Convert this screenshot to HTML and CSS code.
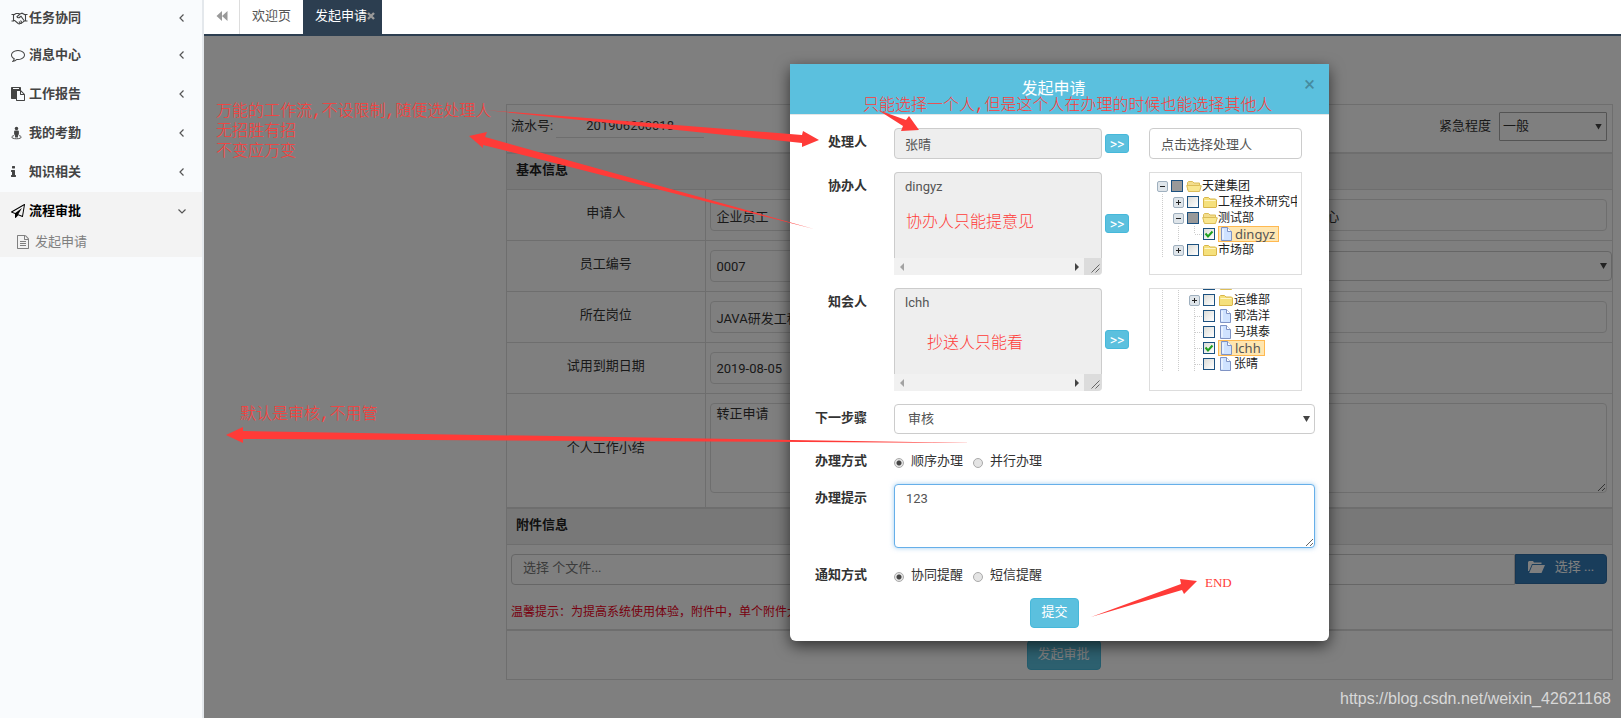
FILE: index.html
```html
<!DOCTYPE html>
<html lang="zh-CN">
<head>
<meta charset="utf-8">
<title>发起申请</title>
<link rel="stylesheet" href="styles.css">
</head>
<body>
<svg class="sprite" aria-hidden="true">
  <symbol id="folder" viewBox="0 0 16 16"><path d="M1.500 13.500V4.500l1-1h4l1.500 1.500h5.500l1 1v7l-.5.5h-12z" fill="#f5e07c" stroke="#d9b64a"/><path d="M2.500 6.500h11" stroke="#fff6c8"/></symbol>
  <symbol id="folder-open" viewBox="0 0 16 16"><path d="M1.500 12V4.500l1-1h4L8 5h5.500v3" fill="#f3dd8c" stroke="#dcbd58"/><path d="M.7 7.500h12.800l1.800.3-1.800 5.700H2.400z" fill="#f9e68f" stroke="#dcbd58"/></symbol>
  <symbol id="doc" viewBox="0 0 16 16"><path d="M2.500 1.500h6l4 4v9h-10z" fill="#cfe2ff" stroke="#7f93c4"/><path d="M8.500 1.500v4h4" fill="#fff" stroke="#7f93c4"/><path d="M4 3v10" stroke="#fff"/></symbol>
  <symbol id="angle" viewBox="0 0 10 10"><path d="M6.500 1.500 3 5l3.500 3.500" fill="none" stroke="currentColor" stroke-width="1.200"/></symbol>
  <symbol id="check" viewBox="0 0 10 10"><path d="M1.500 4.500 4 7.500 8.500 2.500" fill="none" stroke="#1fa01f" stroke-width="2"/></symbol>
</svg>

<nav class="sidebar">
  <a class="nav-item" href="#"><svg class="ico wide" viewBox="0 0 17 14" fill="none" stroke="currentColor" stroke-width="1.100"><path d="M.5 3.500h2v6.500h-2M16.500 3.500h-2v6.500h2M2.500 4l2.500-1.500h2.500L9 3l2-.8 3.500 1.800M2.500 9.500h1.200l3.500 3c.8.5 1.600.3 2-.3.8.3 1.500 0 1.800-.7.7.1 1.300-.4 1.400-1l2.100-1M9 3 6 5.700c.5 1.300 2 1.300 3 .3l1-.7 3 4.200M8 10.500l1.200 1.600M9.500 9.500l1.500 2"/></svg><span>任务协同</span><svg class="angle"><use href="#angle"/></svg></a>
  <a class="nav-item" href="#"><svg class="ico" viewBox="0 0 1792 1792" fill="currentColor"><path d="M896 384q-204 0-381.500 69.500t-282 187.500-104.500 255q0 112 71.500 213.500t201.500 175.500l87 50-27 96q-24 91-70 172 152-63 275-171l43-38 57 6q69 8 130 8 204 0 381.500-69.500t282-187.500 104.500-255-104.500-255-282-187.500-381.500-69.500zm896 512q0 174-120 321.500t-326 233-450 85.500q-70 0-145-8-198 175-460 242-49 14-114 22h-5q-15 0-27-10.500t-16-27.500v-1q-3-4-.5-12t2-10 4.500-9.500l6-9 7-8.500 8-9q7-8 31-34.500t34.500-38 31-39.500 32.500-51 27-59 26-76q-157-89-247.500-220t-90.500-281q0-174 120-321.500t326-233 450-85.500 450 85.500 326 233 120 321.500z"/></svg><span>消息中心</span><svg class="angle"><use href="#angle"/></svg></a>
  <a class="nav-item" href="#"><svg class="ico" viewBox="0 0 1792 1792" fill="currentColor"><path d="M768 1664h896v-640h-416q-40 0-68-28t-28-68v-416h-384v1152zm256-1440v-64q0-13-9.500-22.500t-22.500-9.500h-704q-13 0-22.500 9.500t-9.500 22.500v64q0 13 9.500 22.500t22.500 9.500h704q13 0 22.500-9.500t9.500-22.500zm256 672h299l-299-299v299zm512 128v672q0 40-28 68t-68 28h-960q-40 0-68-28t-28-68v-160h-544q-40 0-68-28t-28-68v-1344q0-40 28-68t68-28h1088q40 0 68 28t28 68v328q21 13 36 28l408 408q28 28 48 76t20 88z"/></svg><span>工作报告</span><svg class="angle"><use href="#angle"/></svg></a>
  <a class="nav-item" href="#"><svg class="ico street" viewBox="0 0 12 14" fill="currentColor"><circle cx="6" cy="2" r="1.900"/><path d="M4 4.300h4l.6.7v3.500l-1 .6V12H4.400V9.100l-1-.6V5z"/><path d="M3.500 9.800C-.8 10.600.2 13.300 6 13.300s6.800-2.700 2.500-3.500" fill="none" stroke="currentColor"/></svg><span>我的考勤</span><svg class="angle"><use href="#angle"/></svg></a>
  <a class="nav-item" href="#"><svg class="ico info" viewBox="576 0 640 1792" fill="currentColor"><path d="M1216 1344v128q0 26-19 45t-45 19h-512q-26 0-45-19t-19-45v-128q0-26 19-45t45-19h64v-384h-64q-26 0-45-19t-19-45v-128q0-26 19-45t45-19h384q26 0 45 19t19 45v576h64q26 0 45 19t19 45zm-128-1152v192q0 26-19 45t-45 19h-256q-26 0-45-19t-19-45v-192q0-26 19-45t45-19h256q26 0 45 19t19 45z"/></svg><span>知识相关</span><svg class="angle"><use href="#angle"/></svg></a>
  <div class="nav-open">
    <a class="nav-item current" href="#"><svg class="ico" viewBox="0 0 1792 1792" fill="currentColor"><path d="M1764 11q33 24 27 64l-256 1536q-5 29-32 45-14 8-31 8-11 0-24-5l-527-215-298 327q-18 21-47 21-14 0-23-4-19-7-30-23.500t-11-36.500v-452l-472-193q-37-14-40-55-3-39 32-59l1664-960q35-21 68 2zm-342 1499l221-1323-1434 827 336 137 863-639-478 797z"/></svg><span>流程审批</span><svg class="angle down"><use href="#angle"/></svg></a>
    <a class="nav-sub" href="#"><svg class="ico" viewBox="0 0 1792 1792" fill="currentColor"><path d="M1596 380q28 28 48 76t20 88v1152q0 40-28 68t-68 28h-1344q-40 0-68-28t-28-68v-1600q0-40 28-68t68-28h896q40 0 88 20t76 48zm-444-244v376h376q-10-29-22-41l-313-313q-12-12-41-22zm384 1528v-1024h-416q-40 0-68-28t-28-68v-416h-768v1536h1280zm-1024-864q0-14 9-23t23-9h704q14 0 23 9t9 23v64q0 14-9 23t-23 9h-704q-14 0-23-9t-9-23v-64zm736 224q14 0 23 9t9 23v64q0 14-9 23t-23 9h-704q-14 0-23-9t-9-23v-64q0-14 9-23t23-9h704zm0 256q14 0 23 9t9 23v64q0 14-9 23t-23 9h-704q-14 0-23-9t-9-23v-64q0-14 9-23t23-9h704z"/></svg><span>发起申请</span></a>
  </div>
</nav>

<main class="main">
  <header class="tabs">
    <button class="tab-back" type="button" aria-label="向左"><svg viewBox="0 0 12 10" fill="currentColor"><path d="M6 0v10L.5 5zM11.500 0v10L6 5z"/></svg></button>
    <a class="tab" href="#">欢迎页</a>
    <a class="tab active" href="#">发起申请<svg viewBox="0 0 8 8"><path d="M1 1l6 6M7 1 1 7" stroke="currentColor" stroke-width="2.400"/></svg></a>
  </header>

  <div class="content">
    <form class="sheet">
      <section class="block top-row">
        <label class="serial">流水号: <input type="text" value="201906260018"></label>
        <label class="urgency">紧急程度 <span class="select"><select><option>一般</option></select></span></label>
      </section>
      <section class="block">
        <h2>基本信息</h2>
        <table>
          <colgroup><col class="c-label"><col class="c-mid"><col class="c-label"><col></colgroup>
          <tr><th><label for="f1">申请人</label></th><td><input id="f1" type="text" value="企业员工"></td><th><label for="f2">所在部门</label></th><td><input id="f2" type="text" value="工程技术研究中心"></td></tr>
          <tr><th><label for="f3">员工编号</label></th><td><input id="f3" type="text" value="0007"></td><th><label for="f4">类型</label></th><td class="flush"><span class="select"><select id="f4"><option></option></select></span></td></tr>
          <tr><th><label for="f5">所在岗位</label></th><td><input id="f5" type="text" value="JAVA研发工程师"></td><th></th><td><input type="text" aria-label="岗位"></td></tr>
          <tr><th><label for="f6">试用到期日期</label></th><td><input id="f6" type="text" value="2019-08-05"></td><td class="blank" colspan="2"></td></tr>
          <tr><th><label for="f7">个人工作小结</label></th><td colspan="3" class="memo"><textarea id="f7">转正申请</textarea></td></tr>
        </table>
      </section>
      <section class="block">
        <h2>附件信息</h2>
        <div class="files">
          <div class="file-group"><input type="text" placeholder="选择 个文件..." aria-label="文件"><button type="button"><svg viewBox="0 0 17 12" fill="currentColor"><path d="M0 10V1l1-1h4l1 1.500h7.500V3H4L1 10zM4.500 4H17l-3.500 8H1.200z"/></svg>选择 ...</button></div>
          <p class="hint">温馨提示：为提高系统使用体验，附件中，单个附件大小</p>
        </div>
      </section>
      <section class="block foot"><button type="button">发起审批</button></section>
    </form>
    <div class="backdrop"></div>
    <div class="modal-layer">
      <form class="modal" role="dialog" aria-label="发起申请">
        <header><h1>发起申请</h1><button type="button" aria-label="关闭">×</button></header>
        <div class="modal-body">
          <label for="m1">处理人</label>
          <div class="field"><input id="m1" class="who" type="text" value="张晴" readonly><button class="pick" type="button">&gt;&gt;</button><input class="side" type="text" value="点击选择处理人" aria-label="选择处理人"></div>

          <label for="m2">协办人</label>
          <div class="field">
            <div class="list"><textarea id="m2" readonly>dingyz</textarea><div class="scroll"><svg class="dim" viewBox="0 0 4 8"><path d="M4 0v8L0 4z"/></svg><svg viewBox="0 0 4 8"><path d="M0 0v8l4-4z"/></svg><i><svg viewBox="0 0 9 9"><path d="M.5 8.500l8-8M4.500 8.500l4-4" fill="none" stroke="#666"/></svg></i></div></div>
            <button class="pick" type="button">&gt;&gt;</button>
            <ul class="side tree">
              <li><b class="sw minus"></b><span class="box half"></span><svg><use href="#folder-open"/></svg>天建集团</li>
              <li><b class="ln"></b><b class="sw"></b><span class="box"></span><svg><use href="#folder"/></svg>工程技术研究中心</li>
              <li><b class="ln"></b><b class="sw minus"></b><span class="box half"></span><svg><use href="#folder-open"/></svg>测试部</li>
              <li><b class="ln"></b><b class="ln"></b><b class="elbow"></b><span class="box"><svg><use href="#check"/></svg></span><em><svg><use href="#doc"/></svg>dingyz</em></li>
              <li><b class="ln"></b><b class="sw"></b><span class="box"></span><svg><use href="#folder"/></svg>市场部</li>
            </ul>
          </div>

          <label for="m3">知会人</label>
          <div class="field">
            <div class="list"><textarea id="m3" readonly>lchh</textarea><div class="scroll"><svg class="dim" viewBox="0 0 4 8"><path d="M4 0v8L0 4z"/></svg><svg viewBox="0 0 4 8"><path d="M0 0v8l4-4z"/></svg><i><svg viewBox="0 0 9 9"><path d="M.5 8.500l8-8M4.500 8.500l4-4" fill="none" stroke="#666"/></svg></i></div></div>
            <button class="pick" type="button">&gt;&gt;</button>
            <ul class="side tree scrolled">
              <li><b class="ln"></b><b class="ln"></b><b class="ln"></b><span class="box"></span><svg><use href="#folder-open"/></svg></li>
              <li><b class="ln"></b><b class="ln"></b><b class="sw"></b><span class="box"></span><svg><use href="#folder"/></svg>运维部</li>
              <li><b class="ln"></b><b class="ln"></b><b class="ln tee"></b><span class="box"></span><svg><use href="#doc"/></svg>郭浩洋</li>
              <li><b class="ln"></b><b class="ln"></b><b class="ln tee"></b><span class="box"></span><svg><use href="#doc"/></svg>马琪泰</li>
              <li><b class="ln"></b><b class="ln"></b><b class="ln tee"></b><span class="box"><svg><use href="#check"/></svg></span><em><svg><use href="#doc"/></svg>lchh</em></li>
              <li><b class="ln"></b><b class="ln"></b><b class="ln tee"></b><span class="box"></span><svg><use href="#doc"/></svg>张晴</li>
            </ul>
          </div>

          <label for="m4">下一步骤</label>
          <div class="field"><span class="select step"><select id="m4"><option>审核</option></select></span></div>

          <span class="lbl">办理方式</span>
          <div class="field radios"><label><input type="radio" name="mode" checked>顺序办理</label><label><input type="radio" name="mode">并行办理</label></div>

          <label for="m5">办理提示</label>
          <div class="field"><textarea id="m5" class="tip">123</textarea></div>

          <span class="lbl">通知方式</span>
          <div class="field radios"><label><input type="radio" name="notice" checked>协同提醒</label><label><input type="radio" name="notice">短信提醒</label></div>

          <button class="submit" type="button">提交</button>
        </div>
      </form>
    </div>
  </div>
</main>

<div class="notes">
  <svg width="1621" height="718" fill="#ff3b38"><path d="M485 110 802 135 803 131 819 140 802 147 802 143zM469 136 487 132 485 137 814 229 483 145 483 148zM226 435 243 427 243 431 975 443 243 439 243 443zM878 110 906 120 909 116 919 130 901 131 903 126zM1091 617 1181 584 1180 579 1197 581 1184 594 1182 590z"/></svg>
  <p class="n1">万能的工作流,不设限制,随便选处理人<br>无招胜有招<br>不变应万变</p>
  <p class="n2">只能选择一个人,但是这个人在办理的时候也能选择其他人</p>
  <p class="n3">协办人只能提意见</p>
  <p class="n4">抄送人只能看</p>
  <p class="n5">默认是审核,不用管</p>
  <p class="n6">END</p>
</div>
<div class="watermark">https://blog.csdn.net/weixin_42621168</div>
</body>
</html>
```
FILE: styles.css
```css
* { box-sizing: border-box; }
body {
  margin: 0;
  min-height: 100vh;
  display: grid;
  grid-template-columns: 204px minmax(0, 1fr);
  font: 13px/18px Roboto, "Noto Sans CJK SC", sans-serif;
  color: #333;
  position: relative;
}
input, select, textarea, button { font: inherit; color: inherit; margin: 0; }
h1, h2, p, ul { margin: 0; padding: 0; }
a { color: inherit; text-decoration: none; }
.sprite { position: absolute; width: 0; height: 0; }

/* sidebar */
.sidebar { background: #f9fbfd; border-right: 2px solid #e4e8ec; }
.nav-item { display: flex; align-items: center; height: 39px; padding: 0 15px 1px 11px; font-weight: bold; color: #444; }
.nav-item:first-child { height: 36px; }
.nav-open .nav-item { height: 39px; padding-bottom: 2px; }
.nav-item span { flex: 1; }
.ico { width: 14px; height: 14px; margin-right: 4px; flex: none; }
.ico.wide { width: 17px; margin-right: 1px; }
.ico.street { width: 11px; margin-right: 7px; }
.ico.info { width: 5px; margin-right: 13px; }
.angle { width: 10px; height: 10px; color: #555; }
.angle.down { transform: rotate(-90deg); }
.nav-open { background: #f3f3f3; }
.nav-item.current { color: #000; }
.nav-sub { display: flex; align-items: center; height: 26px; padding: 0 0 4px 16px; color: #808080; }
.nav-sub .ico { width: 14px; margin-right: 5px; }

/* tab bar */
.main { display: flex; flex-direction: column; }
.tabs { display: flex; height: 36px; border-bottom: 2px solid #2c3e50; background: #fff; }
.tab-back { width: 36px; border: 0; border-right: 1px solid #ddd; background: none; color: #999; padding: 0; }
.tab-back svg { width: 12px; height: 10px; }
.tab { display: flex; align-items: center; padding: 0 12px 2px; color: #555; }
.tab.active { background: #2c3e50; color: #fff; padding-right: 7px; }
.tab svg { width: 8px; height: 8px; color: #999; }

/* form sheet */
.content { position: relative; flex: 1; padding: 68px 8px 38px 302px; background: #fff; }
.backdrop { position: absolute; inset: 0; background: rgba(0, 0, 0, .5); }
.block { border: 1px solid #ddd; }
.block h2 { height: 35px; padding: 7px 9px; background: #f0f0f0; font-size: 13px; line-height: 18px; color: #222; }
.top-row { display: flex; justify-content: space-between; align-items: center; height: 49px; padding: 0 5px 5px 4px; }
.serial, .urgency { display: flex; align-items: center; }
.serial { gap: 3px; }
.serial input { width: 148px; height: 24px; border: 0; border-bottom: 1px solid #ddd; background: none; text-align: center; }
.urgency { gap: 8px; }
.select { position: relative; display: block; flex: 1; }
.select select { appearance: none; width: 100%; height: 30px; border: 1px solid #ccc; border-radius: 4px; background: #fff; padding: 0 12px; }
.select::after { content: ""; position: absolute; right: 5px; top: 12px; width: 7px; height: 6px; background: #444; clip-path: polygon(0 0, 100% 0, 50% 100%); }
.urgency .select { width: 108px; flex: none; }
.urgency select { height: 29px; padding: 0 3px; border-color: #a9a9a9; border-radius: 1px; }
table { width: 100%; table-layout: fixed; border-collapse: collapse; }
.c-label { width: 18%; }
.c-mid { width: 29%; }
th, td { height: 51px; padding: 0 5px 0 4px; border-top: 1px solid #ddd; font-weight: normal; }
th { padding-bottom: 4px; }
th:first-child { border-right: 1px solid #ddd; }
td input, td textarea { display: block; width: 100%; height: 32px; padding: 0 5px; border: 1px solid #ddd; border-radius: 4px; background: #fff; }
td textarea { height: 90px; padding-top: 1px; }
td.memo { height: 113px; padding-bottom: 4px; }
td.flush { padding-right: 0; }
.files { padding: 9px 5px 0 4px; height: 85px; border-top: 1px solid #ddd; }
.file-group { display: flex; }
.file-group input { flex: 1; height: 31px; padding: 0 11px 4px; border: 1px solid #ccc; border-radius: 4px 0 0 4px; background: #fff; }
.file-group input::placeholder { color: #777; }
.file-group button { width: 92px; height: 30px; padding: 0 0 3px; border: 1px solid #2e6da4; border-radius: 0 4px 4px 0; background: #337ab7; color: #fff; display: flex; align-items: center; justify-content: center; gap: 10px; }
.file-group svg { width: 17px; height: 12px; }
.hint { margin-top: 17px; font-size: 12px; font-family: "Noto Sans CJK TC", sans-serif; color: #f00020; white-space: nowrap; }
.foot { display: flex; justify-content: center; align-items: center; height: 50px; padding-left: 8px; }
.foot button { width: 74px; height: 30px; border: 1px solid #46b8da; border-radius: 4px; background: #5bc0de; color: #fff; padding: 0 0 2px; }

/* dialog */
.modal-layer { position: absolute; inset: 28px 8px auto 302px; display: flex; justify-content: center; }
.modal { width: 100%; max-width: 539px; border-radius: 0 0 6px 6px; background: #fff; box-shadow: 0 5px 15px rgba(0, 0, 0, .6); }
.modal header { position: relative; height: 51px; padding-top: 14px; background: #5bc0de; border-bottom: 1px solid #e5e5e5; color: #fff; text-align: center; }
.modal h1 { font-size: 16px; line-height: 22px; font-weight: normal; padding-right: 12px; }
.modal header button { position: absolute; right: 14px; top: 11px; border: 0; padding: 0; background: none; color: #468b9f; font-size: 20px; line-height: 18px; }
.modal-body { display: grid; grid-template-columns: 77px minmax(0, 1fr); column-gap: 27px; row-gap: 13px; padding: 13px 14px 13px 0; }
.modal-body > label, .lbl { padding-top: 5px; text-align: right; font-weight: bold; }
.field { display: flex; align-items: center; color: #555; }
.who { width: 208px; height: 31px; border: 1px solid #ccc; border-radius: 4px; background: #eee; padding: 0 10px; }
.pick { width: 24px; height: 19px; margin: 0 20px 0 3px; padding: 0; border: 1px solid #46b8da; border-radius: 3px; background: #5bc0de; color: #fff; font-size: 14px; line-height: 16px; }
.side { width: 153px; height: 31px; padding: 0 11px; border: 1px solid #ccc; border-radius: 4px; background: #fff; }
.list { width: 208px; height: 103px; display: flex; flex-direction: column; }
.list textarea { flex: 1; display: block; width: 100%; padding: 5px 10px; border: 1px solid #ccc; border-bottom: 0; border-radius: 4px 4px 0 0; background: #eee; resize: none; overflow: hidden; }
.scroll { display: flex; align-items: center; justify-content: space-between; height: 17px; padding-left: 6px; background: #f1f1f1; border-radius: 0 0 4px 0; }
.scroll svg { width: 4px; height: 8px; fill: #444; }
.scroll .dim { fill: #a3a3a3; margin-right: 165px; }
.scroll i { width: 18px; height: 17px; background: #dcdcdc; border-radius: 0 0 4px 0; display: flex; align-items: flex-end; justify-content: flex-end; padding: 2px; }
.scroll i svg { width: 9px; height: 9px; }
.tree { height: 103px; padding: 5px 4px; border-color: #ddd; border-radius: 0; list-style: none; color: #222; font-size: 12px; line-height: 16px; overflow: hidden; }
.tree.scrolled { display: flex; flex-direction: column; justify-content: flex-end; padding: 0 4px 18px; }
.tree li { display: flex; align-items: center; height: 16px; flex: none; white-space: nowrap; overflow: hidden; }
.tree li > *, .tree em svg { flex: none; }
.tree li > svg, .tree em svg { width: 16px; height: 16px; }
.tree b { position: relative; width: 16px; height: 16px; display: flex; align-items: center; justify-content: center; }
.tree .ln, .tree .elbow { background: repeating-linear-gradient(#ccc 0 1px, transparent 1px 2px) 8px 0 / 1px 100% no-repeat; }
.tree .elbow { background-size: 1px 8px; }
.tree .tee::after, .tree .elbow::after { content: ""; width: 7px; margin-left: 9px; border-top: 1px dotted #ccc; }
.tree .sw::before { content: ""; width: 9px; height: 9px; border: 1px solid #9fb0bf; border-radius: 2px; background: linear-gradient(#222, #222) center / 5px 1px no-repeat, linear-gradient(#222, #222) center / 1px 5px no-repeat, #dfe5ea; }
.tree .sw.minus::before { background: linear-gradient(#222, #222) center / 5px 1px no-repeat, #dfe5ea; }
.tree .box { width: 12px; height: 12px; margin: 0 3px 0 1px; border: 1px solid #1c5180; background: linear-gradient(135deg, #dcdcd7, #fff); display: flex; }
.tree .box.half { background: #999; }
.tree .box svg { width: 10px; height: 10px; }
.tree em { display: flex; align-items: center; height: 16px; padding-right: 3px; border: 1px solid #ffb951; background: #ffe6b0; color: #555; font: 13px/14px "Noto Sans", sans-serif; }
.step select { padding-left: 13px; color: #555; }
.radios { height: 24px; gap: 10px; color: #333; padding-top: 4px; }
.radios label { display: flex; align-items: center; gap: 7px; }
.radios input { appearance: none; width: 10px; height: 10px; margin: 3px 0 0; border: 1px solid #aaa; border-radius: 50%; background: #e4e4e4; }
.radios input:checked { background: radial-gradient(#444 0 2px, #e4e4e4 3px); }
.tip { display: block; width: 100%; height: 64px; padding: 5px 11px; border: 1px solid #66afe9; border-radius: 4px; box-shadow: 0 0 5px rgba(102, 175, 233, .6); }
.submit { grid-column: 1 / -1; justify-self: center; width: 49px; height: 30px; margin-left: 4px; padding: 0 0 3px; border: 1px solid #46b8da; border-radius: 4px; background: #5bc0de; color: #fff; }

/* annotations drawn over the page */
.notes { position: absolute; inset: 0; overflow: hidden; pointer-events: none; color: #ff3b38; font: 300 16px/20px "Liberation Mono", "Noto Sans CJK SC", monospace; }
.notes svg { position: absolute; left: 0; top: 0; }
.notes p { position: absolute; white-space: nowrap; }
.n1 { left: 216px; top: 102px; }
.n2 { left: 863px; top: 96px; }
.n3 { left: 906px; top: 213px; }
.n4 { left: 927px; top: 334px; }
.n5 { left: 240px; top: 405px; }
.notes .n6 { left: 1205px; top: 573px; font: 13px/20px "Liberation Serif", serif; }
.watermark { position: absolute; right: 10px; bottom: 9px; font: 16px/20px "Liberation Sans", sans-serif; color: #d8d8d8; }
```
